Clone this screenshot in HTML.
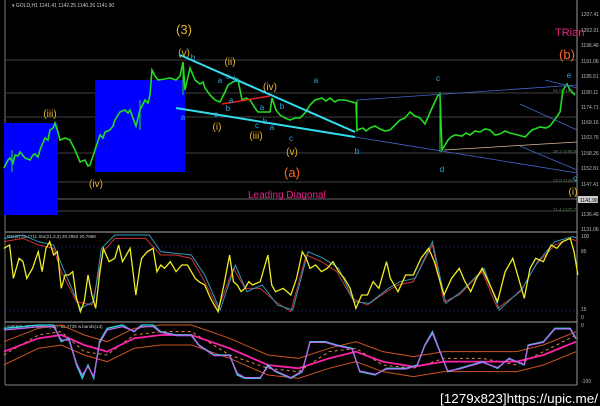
<!DOCTYPE html>
<html><head><meta charset="utf-8"><style>
html,body{margin:0;padding:0;background:#000;width:600px;height:406px;overflow:hidden}
svg{display:block}
text{font-family:"Liberation Sans",sans-serif}
</style></head><body>
<svg width="600" height="406" viewBox="0 0 600 406" xmlns="http://www.w3.org/2000/svg">
<rect width="600" height="406" fill="#000"/>
<line x1="5" y1="0" x2="5" y2="385" stroke="#777" stroke-width="1"/>
<line x1="577" y1="0" x2="577" y2="385" stroke="#999" stroke-width="1"/>
<line x1="5" y1="232" x2="577" y2="232" stroke="#888" stroke-width="1.2"/>
<line x1="5" y1="322" x2="577" y2="322" stroke="#888" stroke-width="1.2"/>
<line x1="5" y1="385" x2="577" y2="385" stroke="#888" stroke-width="1"/>
<g stroke="#555" stroke-width="0.8">
<line x1="5" y1="60" x2="577" y2="60"/><line x1="5" y1="93" x2="577" y2="93"/>
<line x1="5" y1="117" x2="577" y2="117"/><line x1="5" y1="153" x2="577" y2="153"/>
<line x1="5" y1="182" x2="577" y2="182"/><line x1="5" y1="199" x2="577" y2="199" stroke="#888"/>
<line x1="5" y1="211" x2="577" y2="211"/>
</g>
<rect x="4" y="123" width="54" height="92" fill="#0000ff"/>
<rect x="95" y="80" width="90" height="92" fill="#0000ff"/>
<polyline fill="none" stroke="#22dd22" stroke-width="1.6" points="4,168 8,160 10,158 13,163 15,155 18,156 20,152 25,158 30,160 33,155 35,154 38,157 40,150 45,138 48,140 50,130 53,128 55,123 58,132 60,140 65,138 70,140 73,146 75,150 80,162 85,160 88,166 90,165 95,150 100,135 103,138 105,132 110,130 113,126 115,120 120,112 125,110 128,113 130,110 136,126 140,110 145,100 148,103 150,95 152,70 155,76 158,80 165,79 170,78 176,80 180,76 183,62 185,90 190,68 195,80 200,84 203,82 205,88 210,95 215,100 220,102 225,92 228,85 233,82 238,80 242,100 246,98 250,100 255,108 258,112 264,112 270,112 272,98 276,110 280,115 285,118 290,120 295,118 300,118 305,113 310,105 315,100 322,98 326,101 330,98 335,102 338,100 345,100 352,102 356,103 357,130 363,128 366,131 370,128 375,126 380,129 385,131 390,130 395,125 400,120 405,118 410,112 415,116 420,118 425,124 432,108 438,95 440,95 442,150 448,140 451,137 455,135 462,136 466,133 470,135 475,131 480,132 485,129 490,130 495,135 500,134 505,131 510,133 518,135 525,137 532,130 540,127 546,128 550,126 556,118 560,112 563,90 567,84 570,90 575,95"/>
<g stroke="#22dd22" stroke-width="1">
<line x1="140" y1="130" x2="140" y2="100"/><line x1="183" y1="95" x2="183" y2="62"/><line x1="357" y1="100" x2="357" y2="132"/><line x1="440" y1="92" x2="440" y2="152"/><line x1="12" y1="150" x2="12" y2="172"/>
</g>
<g stroke="#33ddee" stroke-width="2">
<line x1="180" y1="55" x2="355" y2="132"/>
<line x1="176" y1="108" x2="355" y2="137"/>
</g>
<line x1="222" y1="104" x2="270" y2="96" stroke="#ee2222" stroke-width="1.5"/>
<g stroke="#4466cc" stroke-width="0.8" fill="none">
<line x1="357" y1="100" x2="577" y2="85"/>
<line x1="355" y1="137" x2="577" y2="173"/>
<line x1="444" y1="150" x2="577" y2="142" stroke="#ddbb99"/>
<line x1="520" y1="104" x2="577" y2="130"/>
<line x1="520" y1="146" x2="577" y2="170"/>
<line x1="545" y1="80" x2="577" y2="88"/>
</g>
<g font-size="10" fill="#e8b52a" text-anchor="middle">
<text x="184" y="34" font-size="13">(3)</text>
<text x="184" y="56">(v)</text>
<text x="50" y="117">(iii)</text>
<text x="96" y="187">(iv)</text>
<text x="230" y="65">(ii)</text>
<text x="270" y="90">(iv)</text>
<text x="217" y="130">(i)</text>
<text x="256" y="139">(iii)</text>
<text x="292" y="155">(v)</text>
<text x="573" y="195">(i)</text>
</g>
<g font-size="13" fill="#ff6622" text-anchor="middle">
<text x="292" y="177">(a)</text><text x="567" y="59">(b)</text>
</g>
<text x="248" y="198" font-size="10" fill="#ee2288">Leading Diagonal</text>
<text x="555" y="36" font-size="11" fill="#ee2288">TRian</text>
<g font-size="8" fill="#2aa8e8" text-anchor="middle">
<text x="193" y="60">b</text><text x="183" y="120">a</text><text x="220" y="83">a</text><text x="228" y="79">c</text><text x="236" y="82">b</text>
<text x="231" y="103">a</text><text x="228" y="111">b</text><text x="216" y="117">c</text><text x="262" y="110">a</text><text x="265" y="124">b</text><text x="257" y="128">c</text>
<text x="272" y="130">a</text><text x="282" y="109">b</text><text x="291" y="141">c</text><text x="316" y="83">a</text><text x="357" y="154">b</text>
<text x="438" y="81">c</text><text x="442" y="172">d</text><text x="569" y="78">e</text><text x="575" y="181">c</text>
</g>
<g font-size="5" fill="#bbb">
<text x="581" y="16">1207.41</text><text x="581" y="32">1202.01</text><text x="581" y="47">1196.46</text><text x="581" y="63">1191.06</text>
<text x="581" y="78">1185.51</text><text x="581" y="94">1180.11</text><text x="581" y="109">1174.71</text><text x="581" y="124">1169.16</text>
<text x="581" y="139">1163.76</text><text x="581" y="155">1158.26</text><text x="581" y="170">1152.81</text><text x="581" y="186">1147.41</text>
<text x="581" y="216">1136.46</text><text x="581" y="231">1131.06</text>
<text x="581" y="238">100</text><text x="581" y="253">85</text><text x="581" y="311">15</text><text x="581" y="319">0</text>
<text x="581" y="327">0</text><text x="581" y="383">-100</text>
</g>
<rect x="578" y="196" width="20" height="7" fill="#ccc"/>
<text x="580" y="202" font-size="5" fill="#000">1141.90</text>
<text x="12" y="7" font-size="5" fill="#ccc">▾ GOLD,H1  1141.41 1142.25 1140.26 1141.90</text>
<g font-size="4.5" fill="#5a7a5a"><text x="553" y="92">61.8 1180</text><text x="553" y="153">38.2 1158.8</text><text x="553" y="182">23.6 1148.6</text><text x="553" y="211">11.4 1137.7</text></g>
<line x1="5" y1="247" x2="577" y2="247" stroke="#223388" stroke-width="0.6" stroke-dasharray="2,2"/>
<line x1="5" y1="311" x2="577" y2="311" stroke="#223388" stroke-width="0.6" stroke-dasharray="2,2"/>
<text x="7" y="238" font-size="4.5" fill="#ccc">RSI(5) 45.1711  Sto(21,3,3) 20.2952 20.7968</text>
<g transform="translate(0,225) scale(0.3827,0.3333)" fill="none">
<polyline vector-effect="non-scaling-stroke" stroke="#cc3333" stroke-width="1" points="10,50 60,40 100,60 140,70 160,140 200,230 240,240 270,80 300,40 340,40 380,40 420,90 460,90 500,100 530,160 570,250 610,130 640,190 680,190 720,230 760,260 800,90 840,110 880,140 920,220 960,240 1010,200 1040,180 1080,170 1130,60 1160,230 1200,210 1260,140 1300,250 1360,200 1400,120 1450,60 1490,40 1510,50"/>
<polyline vector-effect="non-scaling-stroke" stroke="#3399bb" stroke-width="1" points="10,40 60,30 100,50 140,60 165,130 210,250 245,230 265,70 300,30 340,30 390,30 420,80 460,85 500,90 535,150 575,255 615,120 645,200 685,180 725,240 765,255 805,80 845,100 885,130 925,230 965,235 1015,190 1045,170 1085,160 1130,50 1165,235 1205,200 1265,130 1305,255 1365,190 1405,110 1450,50 1495,35 1510,40"/>
<polyline vector-effect="non-scaling-stroke" stroke="#eeee22" stroke-width="1.3" points="10,70 25,60 35,160 50,100 60,110 70,160 85,130 100,80 110,140 120,70 130,50 140,90 150,80 160,190 170,150 180,150 190,140 200,220 210,260 220,230 230,150 240,210 250,250 260,150 270,70 285,110 300,100 310,60 320,110 340,70 355,210 365,130 370,100 385,80 400,70 410,140 420,120 430,130 445,110 460,140 475,120 490,120 500,140 510,160 520,170 535,180 550,220 570,260 585,180 600,90 610,170 620,180 630,200 640,190 650,170 660,180 680,170 700,90 710,180 720,200 740,190 760,210 775,160 790,80 800,100 810,130 825,120 840,140 855,130 870,110 885,140 900,160 915,190 930,250 945,210 960,210 975,170 990,190 1010,110 1020,160 1040,200 1060,150 1080,150 1100,100 1120,70 1135,110 1160,210 1180,160 1200,130 1215,170 1230,200 1245,160 1260,130 1280,180 1300,230 1320,140 1340,100 1355,160 1370,220 1385,130 1400,100 1420,110 1440,60 1455,70 1470,50 1490,40 1500,80 1510,150"/>
</g>
<text x="7" y="328" font-size="4.5" fill="#ccc">%R(60) -67.3784 %R(14) -85.2739  w.bands(13)</text>
<g transform="translate(0,225) scale(0.3827,0.3333)" fill="none">
<polyline vector-effect="non-scaling-stroke" stroke="#cc5522" stroke-width="1" points="10,350 100,310 160,300 220,330 280,350 350,310 420,300 500,300 600,340 700,390 780,400 860,370 930,350 1000,380 1080,395 1160,380 1260,380 1350,380 1420,360 1505,320"/>
<polyline vector-effect="non-scaling-stroke" stroke="#cc5522" stroke-width="1" points="10,420 100,370 160,360 220,390 280,410 350,370 420,360 500,360 600,400 700,450 780,460 860,430 930,410 1000,440 1080,455 1160,440 1260,440 1350,440 1420,420 1505,380"/>
<polyline vector-effect="non-scaling-stroke" stroke="#dd8844" stroke-width="1" stroke-dasharray="3,3" points="10,390 100,330 160,320 220,380 280,390 350,330 420,320 500,320 600,390 700,430 780,440 860,380 930,370 1000,420 1080,430 1160,400 1260,400 1350,420 1420,380 1505,330"/>
<polyline vector-effect="non-scaling-stroke" stroke="#ff22aa" stroke-width="1.8" points="10,380 100,340 160,330 220,360 280,380 350,340 420,330 500,330 600,370 700,420 780,430 860,400 930,380 1000,410 1080,425 1160,410 1260,410 1350,410 1420,390 1505,350"/>
<polyline vector-effect="non-scaling-stroke" stroke="#22dddd" stroke-width="1.3" points="10,310 60,305 100,300 140,300 160,350 180,340 200,420 215,460 230,420 245,460 260,350 280,310 320,300 350,320 370,300 400,300 420,320 460,330 500,330 520,360 560,390 600,390 620,450 640,460 680,460 700,420 720,440 760,460 790,440 810,350 850,350 880,360 920,370 940,440 980,450 1010,430 1060,430 1090,420 1110,360 1130,320 1150,380 1170,440 1200,430 1260,410 1300,430 1330,400 1370,420 1380,360 1420,350 1450,310 1490,310 1505,340"/>
<polyline vector-effect="non-scaling-stroke" stroke="#bb66ee" stroke-width="1.3" points="10,315 60,310 100,305 140,305 160,345 180,345 200,415 215,450 230,425 245,455 260,355 280,315 320,305 350,318 370,305 400,305 420,322 460,332 500,332 520,362 560,392 600,392 620,445 640,458 680,458 700,425 720,438 760,458 790,438 810,352 850,352 880,362 920,372 940,438 980,448 1010,432 1060,432 1090,422 1110,362 1130,325 1150,382 1170,438 1200,432 1260,412 1300,428 1330,402 1370,418 1380,362 1420,352 1450,312 1490,312 1505,342"/>
</g>
<text x="598" y="403" font-size="13" fill="#fff" text-anchor="end" font-family="Liberation Mono,monospace" textLength="158" lengthAdjust="spacingAndGlyphs">[1279x823]https://upic.me/</text>
</svg>
</body></html>
